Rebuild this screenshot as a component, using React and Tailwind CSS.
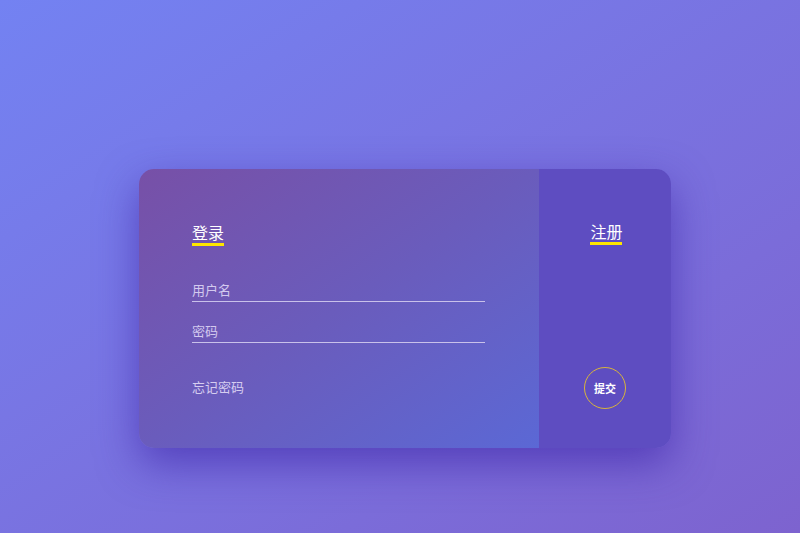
export default function App() {
  return (
    <div
      className="w-[800px] h-[533px] overflow-hidden bg-gradient-to-br from-[#7382f2] to-[#7d63cf] pl-[139px] pt-[169px]"
      style={{ fontFamily: '"Noto Sans CJK SC", "Noto Sans", sans-serif' }}
    >
      <div className="flex w-[532px] h-[279px] rounded-[15px] overflow-hidden shadow-[0_16px_40px_rgba(65,40,170,0.65)]">
        {/* login side */}
        <div className="w-[400px] h-full bg-gradient-to-br from-[#7750a7] via-[#6a5cbc] to-[#5b68d5] pl-[53px] pt-[51px]">
          <div className="inline-flex flex-col">
            <span className="text-[16px] leading-[22px] text-white">登录</span>
            <span className="h-[3px] w-[32px] bg-[#ffe600]" />
          </div>

          <div className="mt-[35px] w-[293px] border-b border-[#c9c1ea] pb-[2px]">
            <input
              placeholder="用户名"
              className="block w-full bg-transparent outline-none text-[13px] leading-[18px] h-[18px] text-white placeholder:text-[#d3c9ee]"
            />
          </div>
          <div className="mt-[20px] w-[293px] border-b border-[#c9c1ea] pb-[2px]">
            <input
              type="password"
              placeholder="密码"
              className="block w-full bg-transparent outline-none text-[13px] leading-[18px] h-[18px] text-white placeholder:text-[#d3c9ee]"
            />
          </div>

          <p className="mt-[35px] text-[13px] leading-[18px] text-[#d6cdf0]">忘记密码</p>
        </div>

        {/* register side */}
        <div className="flex-1 h-full bg-[#5e4dc1] flex flex-col items-center pt-[51px] pl-[3px]">
          <div className="inline-flex flex-col">
            <span className="text-[16px] leading-[22px] text-white">注册</span>
            <span className="h-[3px] w-[32px] bg-[#ffe600]" />
          </div>
          <button className="mt-[122px] -ml-[3px] w-[42px] h-[42px] rounded-full border border-[#d8b43c] text-white text-[11px] font-semibold leading-none flex items-center justify-center">
            提交
          </button>
        </div>
      </div>
    </div>
  );
}
